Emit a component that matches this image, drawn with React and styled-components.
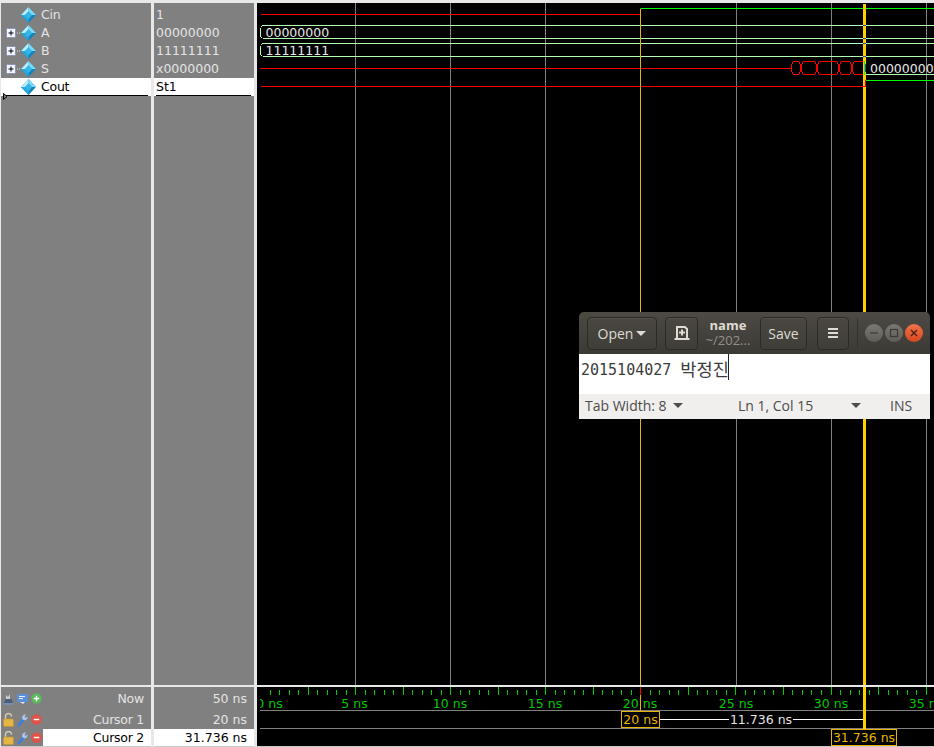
import React from 'react';
import styled, { createGlobalStyle } from 'styled-components';

const GlobalStyle = createGlobalStyle`
  html, body { margin: 0; padding: 0; background: #000; }
  #root { width: 934px; height: 747px; overflow: hidden; }
`;

const Screen = styled.div`
  position: relative;
  width: 934px;
  height: 747px;
  background: #e8e8e8;
  font-family: "DejaVu Sans", sans-serif;
  font-size: 12.5px;
  display: grid;
  grid-template-rows: 682px 60px;
  row-gap: 2px;
  padding-top: 3px;
  box-sizing: border-box;
`;

const PaneRow = styled.div`
  display: grid;
  grid-template-columns: 150px 100px 677px;
  column-gap: 3px;
  padding-left: 1px;
  min-height: 0;
`;

const Column = styled.div`
  position: relative;
  background: #808080;
  padding-top: 3px;
  overflow: hidden;
`;

const SignalRow = styled.div`
  height: 18px;
  display: flex;
  align-items: center;
  color: ${p => (p.$selected ? '#000' : '#e4e4e4')};
  background: ${p => (p.$selected ? '#fff' : 'transparent')};
  line-height: 18px;
`;

const TreeSlot = styled.span`
  width: 20px;
  height: 18px;
  flex: none;
  display: flex;
  align-items: center;
  padding-left: 5px;
  box-sizing: border-box;
`;

const SignalName = styled.span`
  margin-left: 5px;
  letter-spacing: -0.25px;
`;

const SignalValue = styled.span`
  margin-left: 2px;
`;

const Underline = styled.div`
  position: absolute;
  left: ${p => p.$left}px;
  right: ${p => p.$right}px;
  top: 92px;
  height: 1px;
  background: #000;
`;

const Marker = styled.svg`
  position: absolute;
  left: 2px;
  top: 90px;
`;

const WavePane = styled.div`
  background: #000;
  overflow: hidden;
  svg { display: block; }
`;

const FooterColumn = styled.div`
  background: #808080;
  display: flex;
  flex-direction: column;
  border-bottom: 1px solid #c8c8c8;
`;

const FooterRow = styled.div`
  height: ${p => p.$h}px;
  display: flex;
  align-items: ${p => (p.$top ? 'center' : 'flex-end')};
  color: #e4e4e4;
  line-height: 17px;
`;

const IconGroup = styled.div`
  width: 42px;
  flex: none;
  display: flex;
  align-items: center;
  gap: 3px;
  padding-left: 2px;
  box-sizing: border-box;
  height: 17px;
`;

const FooterLabel = styled.div`
  flex: 1;
  height: 17px;
  text-align: right;
  padding-right: ${p => p.$pad}px;
  letter-spacing: ${p => (p.$tight ? '-0.25px' : '0')};
  color: ${p => (p.$selected ? '#000' : '#e4e4e4')};
  background: ${p => (p.$selected ? '#fff' : 'transparent')};
`;

const EditorWindow = styled.div`
  position: absolute;
  left: 579px;
  top: 312px;
  width: 351px;
  height: 107px;
  display: flex;
  flex-direction: column;
  font-family: "Open Sans", "Noto Sans", sans-serif;
  font-size: 14px;
`;

const HeaderBar = styled.div`
  height: 42px;
  flex: none;
  display: flex;
  align-items: center;
  padding: 0 8px 0 8px;
  box-sizing: border-box;
  border-radius: 5px 5px 0 0;
  background: linear-gradient(#4d4a44, #3c3a35);
  color: #dfdbd2;
`;

const HeaderButton = styled.div`
  width: ${p => p.$w}px;
  height: 33px;
  margin-right: ${p => p.$mr || 0}px;
  flex: none;
  display: flex;
  align-items: center;
  justify-content: center;
  gap: 3px;
  box-sizing: border-box;
  border: 1px solid #2c2a27;
  border-radius: 4px;
  background: linear-gradient(#4a4741, #403e39);
  box-shadow: inset 0 1px 0 rgba(255, 255, 255, 0.05);
`;

const TitleBlock = styled.div`
  width: 62px;
  flex: none;
  display: flex;
  flex-direction: column;
  align-items: center;
  line-height: 15px;
  margin-left: -1px;
  margin-right: 1px;
`;

const TitleName = styled.span`
  font-weight: 700;
  font-size: 13px;
  color: #dfdbd2;
`;

const TitlePath = styled.span`
  font-size: 13px;
  color: #93908a;
`;

const HeaderDivider = styled.div`
  width: 1px;
  height: 30px;
  flex: none;
  margin: 0 7px 0 8px;
  background: #34322e;
`;

const WindowDot = styled.div`
  width: 18px;
  height: 18px;
  margin-right: 2px;
  flex: none;
  border-radius: 50%;
  display: flex;
  align-items: center;
  justify-content: center;
  background: ${p => (p.$close ? 'linear-gradient(#f0734a, #d8481f)' : 'linear-gradient(#7a7873, #5f5d58)')};
`;

const EditorBody = styled.div`
  height: 40px;
  flex: none;
  background: #fff;
  display: flex;
  align-items: flex-start;
  padding-left: 2px;
  box-sizing: border-box;
  color: #3c3c3c;
`;

const CodeDigits = styled.span`
  font-family: "DejaVu Sans Mono", monospace;
  font-size: 15px;
  line-height: 32px;
  white-space: pre;
`;

const CodeHangul = styled.span`
  font-family: "Noto Sans CJK KR", sans-serif;
  font-size: 17.6px;
  line-height: 29px;
`;

const Caret = styled.span`
  width: 1px;
  height: 26px;
  margin-left: -1px;
  background: #222;
`;

const StatusBar = styled.div`
  flex: 1;
  background: #f1efed;
  color: #4c4c4c;
  display: flex;
  align-items: center;
  font-size: 14px;
  padding: 0 0 2px 6px;
`;

const StatusItem = styled.span`
  width: ${p => p.$w}px;
  flex: none;
  display: flex;
  align-items: center;
`;

const Arrow = styled.span`
  width: 0;
  height: 0;
  margin-left: ${p => p.$ml || 0}px;
  border-left: 5px solid transparent;
  border-right: 5px solid transparent;
  border-top: 5px solid ${p => p.$color || '#4c4c4c'};
`;

const signals = [
  { name: 'Cin', value: '1' },
  { name: 'A', value: '00000000', bus: true },
  { name: 'B', value: '11111111', bus: true },
  { name: 'S', value: 'x0000000', bus: true },
  { name: 'Cout', value: 'St1', selected: true },
];

// grid and ruler, page coordinates, 19.05 px per ns
const GRID = [355, 450, 545, 736, 831, 926];
const LABELS = [[269.5, '0 ns'], [354.5, '5 ns'], [450, '10 ns'], [545, '15 ns'], [640, '20 ns'], [736, '25 ns'], [831, '30 ns'], [926, '35 ns']];
const BUS = '#b4ffb4';
const CUR = '#ffcf00';
const SEGMENTS = [[791, 800], [801, 816], [817, 838], [839, 851], [852, 864]];

const tickX = i => Math.round(i <= 40 ? 260 + i * 9.5 : 640 + (i - 40) * 9.525);

function Diamond() {
  return (
    <svg width="15" height="16" viewBox="0 0 16 16" preserveAspectRatio="none">
      <polygon points="8,0 16,8 8,16 0,8" fill="#1484bd" />
      <polygon points="8,0 16,8 8,8" fill="#7fd8f5" />
      <polygon points="8,0 0,8 8,8" fill="#bdeefb" />
      <polygon points="0,8 8,16 8,8" fill="#2aa7dc" />
      <polygon points="4,8 8,4 12,8 8,12" fill="#35b6e8" />
    </svg>
  );
}

function Expander() {
  return (
    <svg width="15" height="11" viewBox="0 0 15 11">
      <rect x="0.5" y="0.5" width="9" height="9" rx="1" fill="#f4f6ff" stroke="#8d93b8" />
      <path d="M2.5 5h5M5 2.5v5" stroke="#000" />
      <path d="M11 5h1M13 5h1" stroke="#dcdcdc" />
    </svg>
  );
}

function LockIcon() {
  return (
    <svg width="11" height="14" viewBox="0 0 11 14">
      <path d="M2.5 6V3.5a3 3 0 0 1 6 0" fill="none" stroke="#d6cfae" strokeWidth="1.4" />
      <rect x="0.5" y="6" width="10" height="7.5" rx="1" fill="#e6b548" stroke="#c29228" strokeWidth="0.6" />
    </svg>
  );
}

function WrenchIcon() {
  return (
    <svg width="11" height="14" viewBox="0 0 11 14">
      <path d="M1.8 12.2L6.6 6.4" stroke="#3f7fd6" strokeWidth="2.8" strokeLinecap="round" />
      <path d="M5.6 6.4a3.2 3.2 0 0 1 3.6-4.8L7.6 3.4l1 1.5 2-1.4a3.2 3.2 0 0 1-4 3.6z" fill="#a9c6ee" />
    </svg>
  );
}

function RoundIcon({ color, plus }) {
  return (
    <svg width="11" height="11" viewBox="0 0 12 12">
      <circle cx="6" cy="6" r="5.7" fill={color} />
      <path d="M3 6h6" stroke="#fff" strokeWidth="1.6" />
      {plus && <path d="M6 3v6" stroke="#fff" strokeWidth="1.6" />}
    </svg>
  );
}

function SaveSetIcon() {
  return (
    <svg width="11" height="14" viewBox="0 0 11 14">
      <path d="M1 11l1.5-4h6L10 11z" fill="#4b5f7c" />
      <path d="M3 7V3l2 2 2-3v5z" fill="#c8ccd4" />
      <path d="M0 12h11" stroke="#6e9ad8" />
    </svg>
  );
}

function MonitorIcon() {
  return (
    <svg width="11" height="14" viewBox="0 0 11 14">
      <rect x="0" y="2" width="11" height="8" fill="#5b90d8" />
      <path d="M2 4.5h6M2 6.5h4" stroke="#e8eefc" />
      <path d="M3 10h5l-2 2z" fill="#d8e4f8" />
    </svg>
  );
}

function WaveView() {
  return (
    <svg width="677" height="682" viewBox="257 3 677 682" shapeRendering="crispEdges">
      {GRID.map(x => <rect key={x} x={x} y="3" width="1" height="682" fill="#808080" />)}

      {/* Cin */}
      <rect x="261" y="14" width="379" height="1" fill="#f00" />
      <rect x="640" y="8" width="1" height="7" fill="#a04080" />
      <rect x="641" y="8" width="293" height="1" fill="#0f0" />

      {/* A and B buses */}
      <path d="M262.5 25.5H934M262.5 38.5H934M260.5 27.5V36.5M260.5 27.5L262.5 25.5M260.5 36.5L262.5 38.5" stroke={BUS} fill="none" />
      <path d="M262.5 43.5H934M262.5 56.5H934M260.5 45.5V54.5M260.5 45.5L262.5 43.5M260.5 54.5L262.5 56.5" stroke={BUS} fill="none" />
      <text x="265.5" y="37" fill="#e8e8e8" fontSize="12.5" fontFamily="DejaVu Sans">00000000</text>
      <text x="265.5" y="55" fill="#e8e8e8" fontSize="12.5" fontFamily="DejaVu Sans">11111111</text>

      {/* S, x until the sum settles */}
      <rect x="260" y="68" width="531" height="1" fill="#f00" />
      {SEGMENTS.map(([a, b]) => (
        <path key={a} d={`M${a + 0.5} 64.5L${a + 2.5} 61.5H${b - 1.5}L${b + 0.5} 64.5V71.5L${b - 1.5} 74.5H${a + 2.5}L${a + 0.5} 71.5Z`} stroke="#f00" fill="none" />
      ))}
      <path d="M866 74.5H934" stroke={BUS} />
      <text x="870" y="73" fill="#e8e8e8" fontSize="12.5" fontFamily="DejaVu Sans">00000000</text>

      {/* Cout */}
      <rect x="261" y="86" width="603" height="1" fill="#f00" />
      <rect x="866" y="80" width="68" height="1" fill="#0f0" />

      {/* cursors */}
      <rect x="640" y="9" width="1" height="676" fill="#e8b400" />
      <rect x="863" y="4" width="3" height="681" fill={CUR} />
      {[25, 38, 43, 56].map(y => <rect key={y} x="863" y={y} width="3" height="1" fill="#3a3ab0" />)}
      <rect x="864" y="61" width="1" height="14" fill="#0f0" />
      <rect x="865" y="64" width="1" height="8" fill="#5a30a0" />
      <rect x="865" y="80" width="1" height="7" fill="#f00" />
      <rect x="863" y="86" width="2" height="1" fill="#f00" />
    </svg>
  );
}

function Ruler() {
  const ticks = [];
  for (let i = 1; i < 72; i++) ticks.push(i);
  return (
    <svg width="677" height="60" viewBox="257 687 677 60" shapeRendering="crispEdges">
      {ticks.map(i => {
        const x = tickX(i);
        const tall = i % 5 === 0;
        return <rect key={i} x={x} y={tall ? 687 : 690} width="1" height={tall ? 8 : 5} fill="#0c0" />;
      })}
      {LABELS.map(([x, label]) => (
        <text key={label} x={x} y="708" textAnchor="middle" fill="#00c800" fontSize="12.5" fontFamily="DejaVu Sans">{label}</text>
      ))}
      <rect x="257" y="696" width="3" height="15" fill="#000" />
      <rect x="260" y="710" width="674" height="1" fill="#808080" />
      <rect x="260" y="728" width="674" height="1" fill="#808080" />
      <rect x="640" y="687" width="1" height="24" fill="#e8b400" />
      <rect x="640" y="687" width="1" height="8" fill="#f00" />
      <rect x="863" y="687" width="3" height="42" fill={CUR} />

      <rect x="621.5" y="711.5" width="38" height="16" fill="#000" stroke="#e8b400" />
      <text x="640.5" y="724" textAnchor="middle" fill="#e8b400" fontSize="12.5" fontFamily="DejaVu Sans">20 ns</text>
      <rect x="660" y="719" width="69" height="1" fill="#fff" />
      <rect x="793" y="719" width="70" height="1" fill="#fff" />
      <text x="761" y="724" textAnchor="middle" fill="#e4e4e4" fontSize="12.5" fontFamily="DejaVu Sans">11.736 ns</text>

      <rect x="831.5" y="729.5" width="65" height="16" fill="#000" stroke="#e8b400" />
      <text x="864" y="742" textAnchor="middle" fill="#e8b400" fontSize="12.5" fontFamily="DejaVu Sans">31.736 ns</text>
      <rect x="257" y="746" width="677" height="1" fill="#c8c8c8" />
    </svg>
  );
}

function Editor() {
  return (
    <EditorWindow>
      <HeaderBar>
        <HeaderButton $w={70} $mr={8}>Open <Arrow $color="#dfdbd2" /></HeaderButton>
        <HeaderButton $w={33}>
          <svg width="20" height="20" viewBox="0 0 20 20" fill="none" stroke="#dfdbd2" strokeWidth="2">
            <path d="M5 15V4h8l2 2v9" />
            <path d="M2.5 16h15" />
            <path d="M10 6.5v6M7 9.5h6" />
          </svg>
        </HeaderButton>
        <TitleBlock>
          <TitleName>name</TitleName>
          <TitlePath>~/202...</TitlePath>
        </TitleBlock>
        <HeaderButton $w={47} $mr={10}>Save</HeaderButton>
        <HeaderButton $w={32}>
          <svg width="12" height="12" viewBox="0 0 12 12">
            <path d="M1 2h10M1 6h10M1 10h10" stroke="#dfdbd2" strokeWidth="2" />
          </svg>
        </HeaderButton>
        <HeaderDivider />
        <WindowDot>
          <svg width="10" height="10" viewBox="0 0 10 10"><path d="M1 5h8" stroke="#3c3a35" strokeWidth="1.2" /></svg>
        </WindowDot>
        <WindowDot>
          <svg width="10" height="10" viewBox="0 0 10 10"><rect x="1.5" y="1.5" width="7" height="7" fill="none" stroke="#3c3a35" strokeWidth="1.2" /></svg>
        </WindowDot>
        <WindowDot $close>
          <svg width="10" height="10" viewBox="0 0 10 10"><path d="M2 2l6 6M8 2l-6 6" stroke="#4a2010" strokeWidth="1.4" /></svg>
        </WindowDot>
      </HeaderBar>
      <EditorBody>
        <CodeDigits>2015104027 </CodeDigits>
        <CodeHangul>박정진</CodeHangul>
        <Caret />
      </EditorBody>
      <StatusBar>
        <StatusItem $w={153}>Tab Width: 8<Arrow $ml={6} /></StatusItem>
        <StatusItem $w={152}>Ln 1, Col 15<Arrow $ml={38} /></StatusItem>
        <span>INS</span>
      </StatusBar>
    </EditorWindow>
  );
}

export default function App() {
  return (
    <Screen>
      <GlobalStyle />
      <PaneRow>
        <Column>
          {signals.map(s => (
            <SignalRow key={s.name} $selected={s.selected}>
              <TreeSlot>{s.bus && <Expander />}</TreeSlot>
              <Diamond />
              <SignalName>{s.name}</SignalName>
            </SignalRow>
          ))}
          <Underline $left={2} $right={3} />
          <Marker width="5" height="7" viewBox="0 0 5 7">
            <path d="M0.5 0.5L4 3.5L0.5 6.5Z" fill="#808080" stroke="#000" />
          </Marker>
        </Column>
        <Column>
          {signals.map(s => (
            <SignalRow key={s.name} $selected={s.selected}>
              <SignalValue>{s.value}</SignalValue>
            </SignalRow>
          ))}
          <Underline $left={2} $right={3} />
        </Column>
        <WavePane><WaveView /></WavePane>
      </PaneRow>
      <PaneRow>
        <FooterColumn>
          <FooterRow $h={23} $top>
            <IconGroup><SaveSetIcon /><MonitorIcon /><RoundIcon color="#5cb85c" plus /></IconGroup>
            <FooterLabel $pad={7} $tight>Now</FooterLabel>
          </FooterRow>
          <FooterRow $h={18}>
            <IconGroup><LockIcon /><WrenchIcon /><RoundIcon color="#e0524a" /></IconGroup>
            <FooterLabel $pad={7} $tight>Cursor 1</FooterLabel>
          </FooterRow>
          <FooterRow $h={18}>
            <IconGroup><LockIcon /><WrenchIcon /><RoundIcon color="#e0524a" /></IconGroup>
            <FooterLabel $pad={7} $tight $selected>Cursor 2</FooterLabel>
          </FooterRow>
        </FooterColumn>
        <FooterColumn>
          <FooterRow $h={23} $top><FooterLabel $pad={7}>50 ns</FooterLabel></FooterRow>
          <FooterRow $h={18}><FooterLabel $pad={7}>20 ns</FooterLabel></FooterRow>
          <FooterRow $h={18}><FooterLabel $pad={7} $selected>31.736 ns</FooterLabel></FooterRow>
        </FooterColumn>
        <WavePane><Ruler /></WavePane>
      </PaneRow>
      <Editor />
    </Screen>
  );
}
